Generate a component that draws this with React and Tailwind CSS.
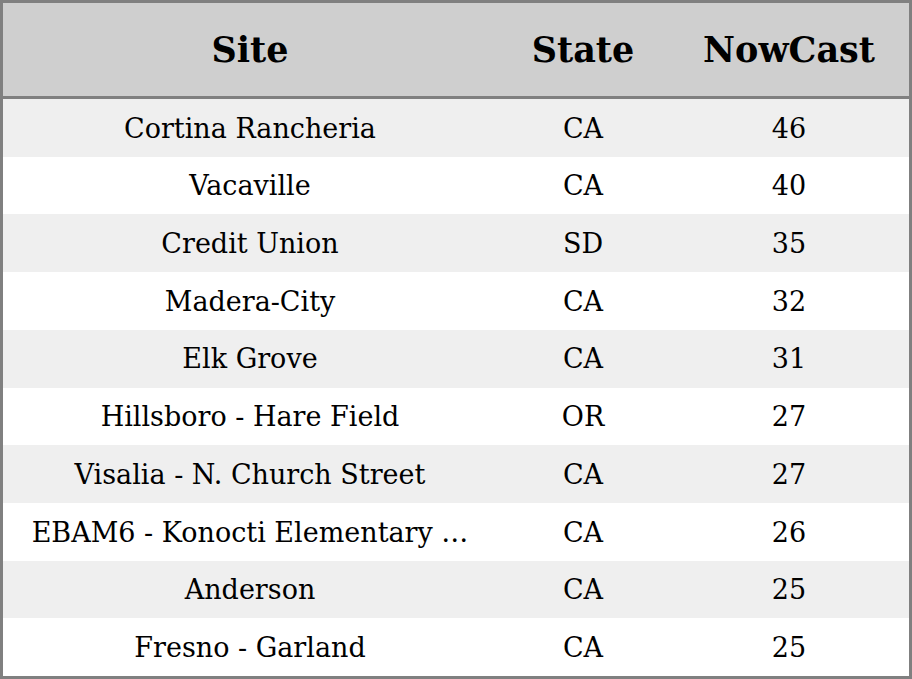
export default function App() {
  const rows = [
    ["Cortina Rancheria", "CA", "46"],
    ["Vacaville", "CA", "40"],
    ["Credit Union", "SD", "35"],
    ["Madera-City", "CA", "32"],
    ["Elk Grove", "CA", "31"],
    ["Hillsboro - Hare Field", "OR", "27"],
    ["Visalia - N. Church Street", "CA", "27"],
    ["EBAM6 - Konocti Elementary \u2026", "CA", "26"],
    ["Anderson", "CA", "25"],
    ["Fresno - Garland", "CA", "25"],
  ];
  return (
    <div className="w-[912px] h-[679px] border-[3px] border-[#808080] bg-white flex flex-col text-black font-['DejaVu_Serif',serif]">
      <div className="h-[91px] pt-[2px] shrink-0 bg-[#cfcfcf] border-b-[3px] border-[#808080] box-content flex items-center text-[35px] font-bold">
        <div className="w-[494px] text-center">Site</div>
        <div className="w-[172px] text-center">State</div>
        <div className="flex-1 text-center">NowCast</div>
      </div>
      <div className="flex-1 flex flex-col">
        {rows.map((r, i) => (
          <div
            key={i}
            className={`flex-1 flex items-center pt-[2px] text-[27px] ${i % 2 === 0 ? "bg-[#efefef]" : "bg-white"}`}
          >
            <div className="w-[494px] text-center whitespace-nowrap">{r[0]}</div>
            <div className="w-[172px] text-center">{r[1]}</div>
            <div className="flex-1 text-center">{r[2]}</div>
          </div>
        ))}
      </div>
    </div>
  );
}
